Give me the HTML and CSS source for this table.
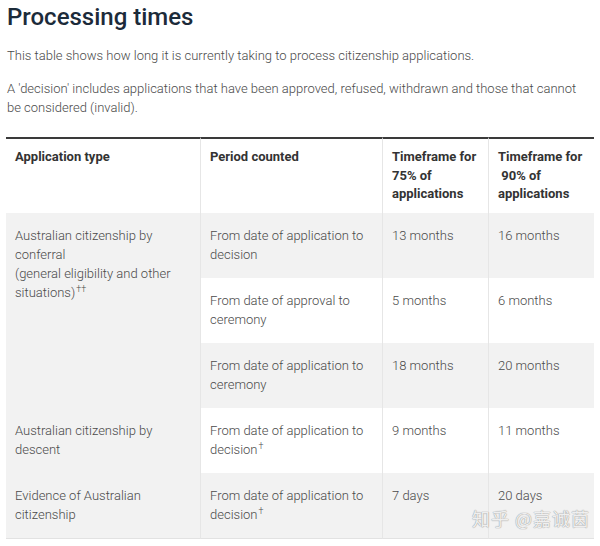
FILE: index.html
```html
<!DOCTYPE html>
<html>
<head>
<meta charset="utf-8">
<link rel="stylesheet" href="styles.css">
</head>
<body>
<div class="page">
  <h1 class="title">Processing times</h1>
  <p class="intro">This table shows how long it is currently taking to process citizenship applications.</p>
  <p class="intro">A 'decision' includes applications that have been approved, refused, withdrawn and those that cannot be considered (invalid).</p>
  <table class="times">
    <colgroup>
      <col class="c1"><col class="c2"><col class="c3"><col class="c4">
    </colgroup>
    <thead>
      <tr>
        <th>Application type</th>
        <th>Period counted</th>
        <th>Timeframe for 75% of applications</th>
        <th>Timeframe for<br>&nbsp;90% of applications</th>
      </tr>
    </thead>
    <tbody>
      <tr class="shade">
        <td rowspan="3" class="type">Australian citizenship by conferral<br>(general eligibility and other situations)<sup class="mark">††</sup></td>
        <td>From date of application to decision</td>
        <td>13 months</td>
        <td>16 months</td>
      </tr>
      <tr>
        <td>From date of approval to ceremony</td>
        <td>5 months</td>
        <td>6 months</td>
      </tr>
      <tr class="shade">
        <td>From date of application to ceremony</td>
        <td>18 months</td>
        <td>20 months</td>
      </tr>
      <tr>
        <td class="type">Australian citizenship by descent</td>
        <td>From date of application to decision<sup class="mark">†</sup></td>
        <td>9 months</td>
        <td>11 months</td>
      </tr>
      <tr class="shade last">
        <td class="type">Evidence of Australian citizenship</td>
        <td>From date of application to decision<sup class="mark">†</sup></td>
        <td>7 days</td>
        <td>20 days</td>
      </tr>
    </tbody>
  </table>
  <div class="watermark">知乎 @嘉诚茵</div>
</div>
</body>
</html>
```
FILE: styles.css
```css
html, body {
  margin: 0;
  padding: 0;
  background: #fff;
}
.page {
  position: relative;
  padding: 0 6px 0 6px;
  font-family: Roboto, "Liberation Sans", sans-serif;
}
.title {
  margin: 0;
  padding-top: 2px;
  font-size: 24px;
  line-height: 30px;
  font-weight: 500;
  color: #1c2b3a;
  padding-left: 1px;
}
.intro {
  margin: 14px 0 0 1px;
  max-width: 578px;
  font-size: 13px;
  line-height: 19px;
  font-weight: 300;
  color: #4a4a4a;
}
.intro + .intro {
  margin-top: 14px;
}
.times {
  margin-top: 20px;
  width: 588px;
  border-collapse: separate;
  border-spacing: 0;
  table-layout: fixed;
  font-size: 13px;
  line-height: 19px;
}
.c1 { width: 194px; }
.c2 { width: 182px; }
.c3 { width: 106px; }
.c4 { width: 106px; }
.times th {
  height: 76px;
  box-sizing: border-box;
  text-align: left;
  vertical-align: top;
  padding: 9px 8px 0 9px;
  font-weight: 700;
  color: #333;
  line-height: 18.5px;
  border-top: 2px solid #3a3a3a;
}
.times th + th,
.times td + td {
  border-left: 1px solid #e6e6e6;
}
.times td {
  height: 65px;
  box-sizing: border-box;
  vertical-align: top;
  padding: 13px 8px 0 9px;
  font-weight: 300;
  color: #4a4a4a;
}
.times td.type {
  background: #f2f2f2;
  border-left: none;
}
.times tr.shade td {
  background: #f2f2f2;
}
.times tbody tr:not(.shade) td:not(.type) {
  background: #fff;
}
.times tr:nth-child(2) td,
.times tr:nth-child(3) td {
  border-left: 1px solid #e6e6e6;
}
.times tr.last td {
  height: 66px;
  border-bottom: 1px solid #e2e2e2;
}
.times .mark {
  font-size: 9px;
  line-height: 12px;
  vertical-align: top;
  padding-left: 1px;
}
.watermark {
  position: absolute;
  left: 472px;
  top: 506px;
  font-family: "Noto Sans CJK SC", sans-serif;
  font-size: 18px;
  line-height: 24px;
  color: rgba(255, 255, 255, 0.85);
  text-shadow: 0 0 1px #9a9a9a, 0 0 1px #9a9a9a;
  letter-spacing: 1px;
}
```
